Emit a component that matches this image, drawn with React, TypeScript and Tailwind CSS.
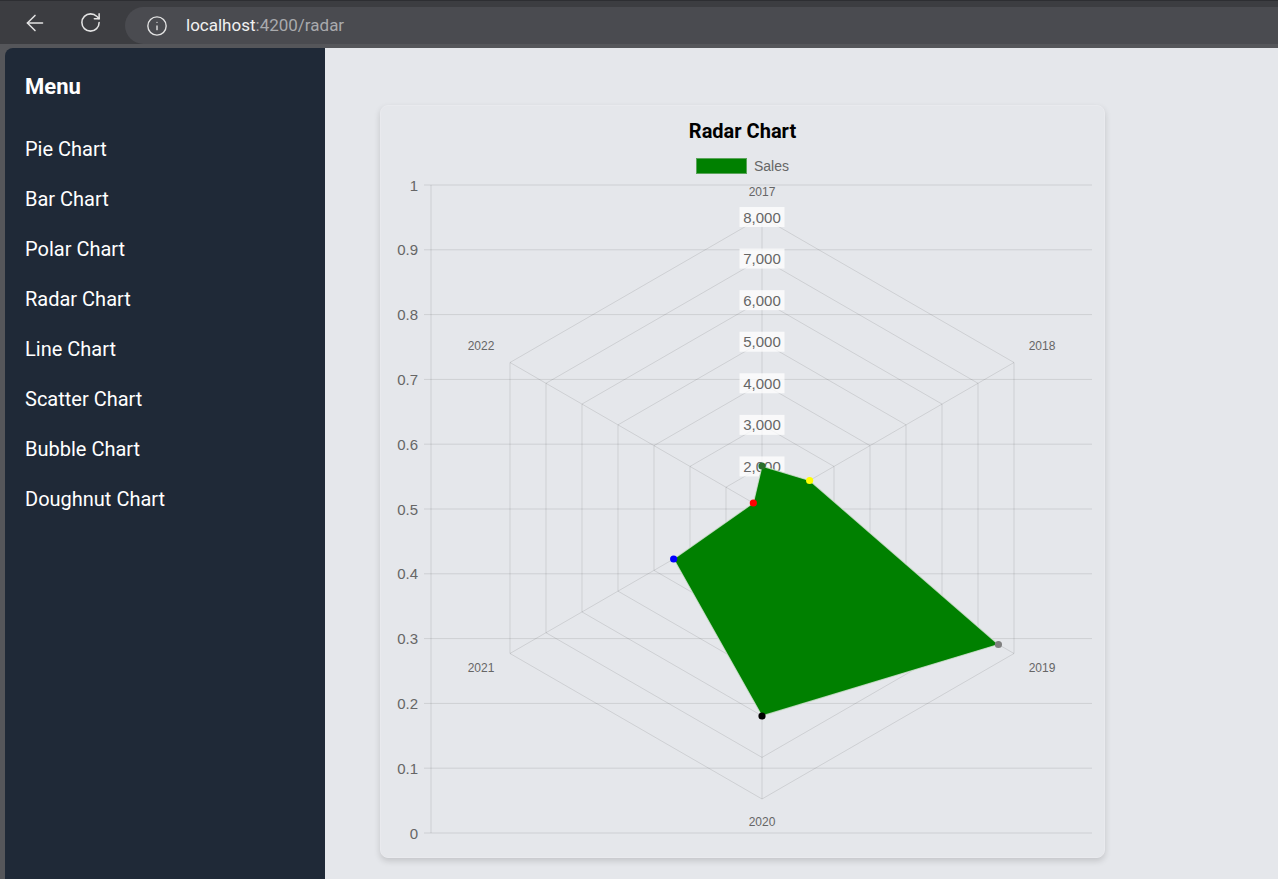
import { ArrowLeft, Info, RotateCw } from 'lucide-react'

const menuItems = [
  'Pie Chart',
  'Bar Chart',
  'Polar Chart',
  'Radar Chart',
  'Line Chart',
  'Scatter Chart',
  'Bubble Chart',
  'Doughnut Chart',
]

// radar geometry, in page pixels
const cx = 761
const cy = 508
const step = 41.57 // px per 1,000 on the radial scale (min 1,000)
const years = ['2017', '2018', '2019', '2020', '2021', '2022']
const radii = [42, 55, 273, 208, 102, 10]
const pointColors = ['#2a6f2a', '#ffff00', '#808080', '#000000', '#0000ff', '#ff0000']

const chartFont = '"Liberation Sans", Arial, sans-serif'
const grid = 'rgba(0,0,0,0.1)'

function at(r: number, i: number) {
  const a = ((-90 + 60 * i) * Math.PI) / 180
  return [cx + r * Math.cos(a), cy + r * Math.sin(a)]
}

function hexagon(r: number) {
  return years.map((_, i) => at(r, i).join(',')).join(' ')
}

function RadarSvg() {
  const yTicks = Array.from({ length: 11 }, (_, i) => i)
  const rings = [1, 2, 3, 4, 5, 6, 7]
  const outer = step * 7
  const labelPos: [number, number][] = [
    [761, 192],
    [1041, 346],
    [1041, 668],
    [761, 822],
    [480, 668],
    [480, 346],
  ]
  const data = radii.map((r, i) => at(r, i))

  return (
    <svg width={725} height={678} className="block overflow-visible">
      <g transform="translate(-380,-180)" fontFamily={chartFont}>
        {/* cartesian y axis left over from the chart options */}
        {yTicks.map((i) => {
          const y = 833 - i * 64.8
          return (
            <g key={i}>
              <line x1={423} x2={1091} y1={y} y2={y} stroke={grid} />
              <text x={417} y={y} textAnchor="end" dominantBaseline="central" fontSize={15} fill="#666">
                {i === 0 ? '0' : i === 10 ? '1' : `0.${i}`}
              </text>
            </g>
          )
        })}
        <line x1={430} x2={430} y1={185} y2={833} stroke={grid} />

        {/* radial grid */}
        {rings.map((k) => (
          <polygon key={k} points={hexagon(k * step)} fill="none" stroke={grid} />
        ))}
        {years.map((_, i) => {
          const [x, y] = at(outer, i)
          return <line key={i} x1={cx} y1={cy} x2={x} y2={y} stroke={grid} />
        })}

        {/* radial ticks, drawn under the dataset */}
        {rings.map((k) => {
          const y = cy - k * step
          return (
            <g key={k}>
              <rect x={cx - 22.5} y={y - 10} width={45} height={20} fill="rgba(255,255,255,0.75)" />
              <text x={cx} y={y} textAnchor="middle" dominantBaseline="central" fontSize={15} fill="#666">
                {`${k + 1},000`}
              </text>
            </g>
          )
        })}

        {/* point labels */}
        {labelPos.map(([x, y], i) => (
          <text key={i} x={x} y={y} textAnchor="middle" dominantBaseline="central" fontSize={12} fill="#666">
            {years[i]}
          </text>
        ))}

        {/* dataset */}
        <polygon
          points={data.map((p) => p.join(',')).join(' ')}
          fill="#008000"
          stroke="rgba(215,228,215,0.8)"
          strokeWidth={1.2}
        />
        {data.map(([x, y], i) => (
          <circle key={i} cx={x} cy={y} r={3.6} fill={pointColors[i]} />
        ))}
      </g>
    </svg>
  )
}

function BrowserBar() {
  return (
    <div className="h-[48px] shrink-0 overflow-hidden border-t border-[#2d2e32] bg-[#3c3d41]">
      <div className="flex h-[43px] items-center">
        <div className="flex w-[70px] justify-center">
          <ArrowLeft size={26} strokeWidth={1.4} className="text-[#e3e3e3]" />
        </div>
        <div className="flex w-[40px] justify-center">
          <RotateCw size={23} strokeWidth={1.6} className="text-[#e3e3e3]" />
        </div>
        <div className="ml-[15px] -mr-10 mt-[6px] flex h-[37px] flex-1 items-center self-start rounded-full bg-[#4a4b50] pl-[21px]">
          <Info size={22} strokeWidth={1.5} className="text-[#e3e3e3]" />
          <span className="ml-[18px] font-['Roboto',sans-serif] text-[17px] text-[#f1f1f1]">
            localhost<span className="text-[#a9aaad]">:4200/radar</span>
          </span>
        </div>
      </div>
      <div className="h-[4px] bg-[#55565a]" />
    </div>
  )
}

export default function App() {
  return (
    <div className="flex h-screen w-full flex-col overflow-hidden bg-[#55565a] font-['Roboto',sans-serif]">
      <BrowserBar />
      <div className="flex min-h-0 flex-1 pl-[5px]">
        <div className="flex flex-1 overflow-hidden rounded-tl-lg">
          <aside className="w-[320px] shrink-0 bg-[#1f2937] px-5 pt-[25px] text-white">
            <h2 className="text-[22px] font-bold leading-[28px]">Menu</h2>
            <ul className="mt-[23px]">
              {menuItems.map((item) => (
                <li key={item} className="flex h-[50px] items-center text-[20px]">
                  {item}
                </li>
              ))}
            </ul>
          </aside>
          <main className="flex-1 bg-[#e5e7eb] pl-[55px] pt-[57px]">
            <div className="h-[753px] w-[725px] rounded-lg border border-[#e9eaee] bg-[#e5e7eb] shadow-[0_3px_6px_rgba(0,0,0,0.15)]">
              <div className="pt-[13px] text-center text-[20px] font-bold leading-[24px] text-black">Radar Chart</div>
              <div className="mt-[15px] flex h-[16px] items-center justify-center gap-[7px]">
                <span className="h-[16px] w-[51px] border border-[#5aa45a] bg-[#008000]" />
                <span className="font-['Liberation_Sans',Arial,sans-serif] text-[14px] text-[#666]">Sales</span>
              </div>
              <div className="mt-[6px]">
                <RadarSvg />
              </div>
            </div>
          </main>
        </div>
      </div>
    </div>
  )
}
